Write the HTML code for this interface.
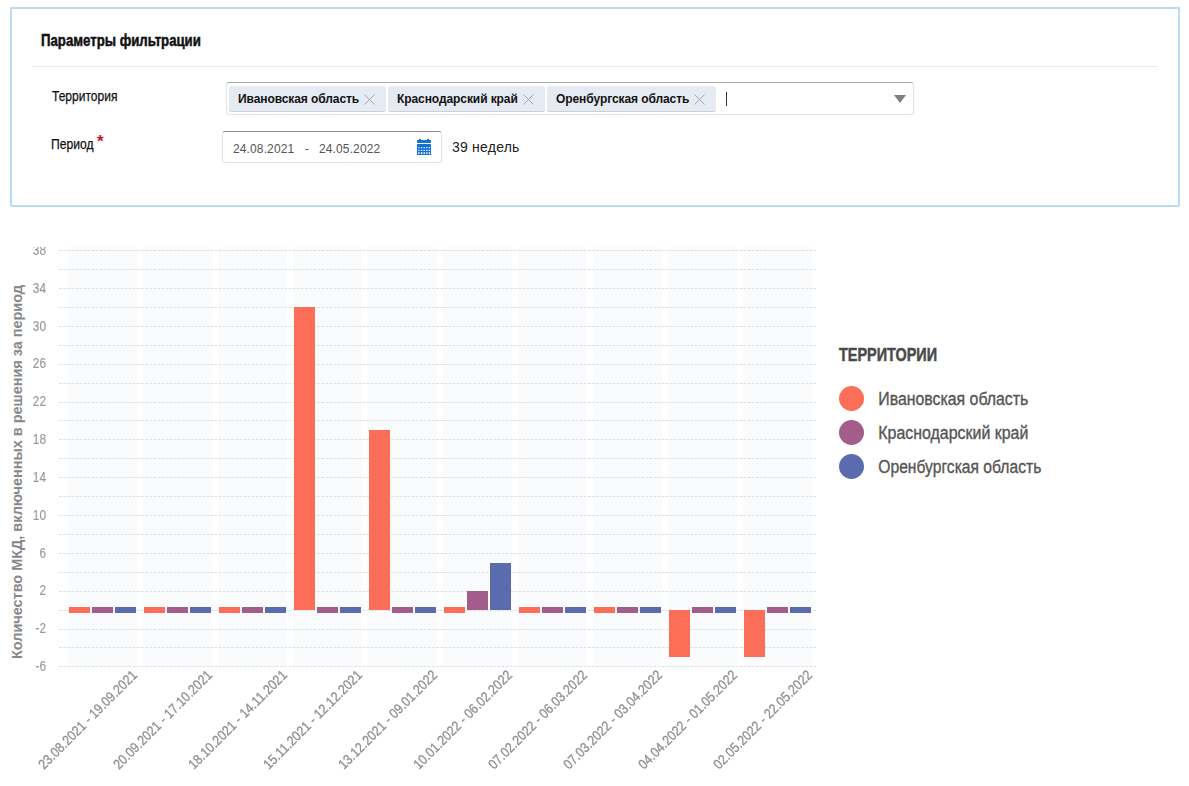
<!DOCTYPE html>
<html lang="ru"><head><meta charset="utf-8"><title>Параметры фильтрации</title>
<style>
html,body{margin:0;padding:0;background:#fff;}
body{width:1189px;height:786px;position:relative;overflow:hidden;font-family:"Liberation Sans",sans-serif;color:#111;}
.panel{position:absolute;left:10px;top:7px;width:1166px;height:196px;border:2px solid #badbf6;border-radius:0 0 2px 2px;background:#fff;}
.cond{position:absolute;white-space:nowrap;display:inline-block;transform-origin:0 0;line-height:1;}
.title{left:41px;top:33px;font-size:16px;font-weight:bold;color:#111;-webkit-text-stroke:0.5px #111;}
.hr{position:absolute;left:32px;top:66px;width:1126px;height:1px;background:#e9e9e9;}
.lbl{font-size:14px;color:#111;-webkit-text-stroke:0.25px #111;}
.select{position:absolute;left:226px;top:82px;width:686px;height:31px;border:1px solid #dfe4ea;border-top-color:#a9a9a9;border-radius:3px;background:#fff;}
.tag{position:absolute;top:86px;height:25px;background:#e6eaf2;border-radius:3px;border-bottom:1px solid #c9cdd4;box-sizing:content-box;}
.tag .tt{position:absolute;left:9px;top:6px;letter-spacing:-0.08px;font-size:12px;font-weight:bold;line-height:14px;color:#111;white-space:nowrap;}
.tag .x{position:absolute;right:11px;top:8px;}
.caret{position:absolute;left:726px;top:92px;width:1px;height:14px;background:#333;}
.arrow{position:absolute;left:894px;top:95px;width:0;height:0;border-left:6px solid transparent;border-right:6px solid transparent;border-top:8px solid #808080;}
.date{position:absolute;left:222px;top:131px;width:218px;height:30px;border:1px solid #dfe4ea;border-top-color:#8f8f8f;border-radius:3px;background:#fff;}
.dtext{position:absolute;top:142px;letter-spacing:0.12px;font-size:12px;line-height:14px;color:#555;white-space:pre;}
.weeks{position:absolute;left:452px;top:139px;letter-spacing:0.22px;font-size:14px;line-height:16px;color:#222;white-space:nowrap;}
.cal{position:absolute;left:416px;top:138px;}
.chart{position:absolute;left:0;top:210px;}
.gray{will-change:transform;}
</style></head>
<body>
<div class="panel"></div>
<span class="cond title" style="transform:scaleX(0.8250)">Параметры фильтрации</span>
<div class="hr"></div>
<span class="cond lbl" style="left:52px;top:89px;transform:scaleX(0.8597)">Территория</span>
<span class="cond lbl" style="left:51px;top:137px;transform:scaleX(0.8654)">Период</span>
<span class="cond" style="left:97px;top:133px;font-size:17px;font-weight:bold;color:#c8102e">*</span>
<div class="select"></div>
<div class="tag" style="left:229px;width:157px"><span class="tt">Ивановская область</span><svg class="x" width="11" height="11" viewBox="0 0 11 11"><path d="M0.5 0.5 L10.5 10.5 M10.5 0.5 L0.5 10.5" stroke="#a4abb5" stroke-width="1" fill="none"/></svg></div>
<div class="tag" style="left:388px;width:157px"><span class="tt">Краснодарский край</span><svg class="x" width="11" height="11" viewBox="0 0 11 11"><path d="M0.5 0.5 L10.5 10.5 M10.5 0.5 L0.5 10.5" stroke="#a4abb5" stroke-width="1" fill="none"/></svg></div>
<div class="tag" style="left:547px;width:169px"><span class="tt">Оренбургская область</span><svg class="x" width="11" height="11" viewBox="0 0 11 11"><path d="M0.5 0.5 L10.5 10.5 M10.5 0.5 L0.5 10.5" stroke="#a4abb5" stroke-width="1" fill="none"/></svg></div>
<div class="caret"></div>
<div class="arrow"></div>
<div class="date"></div>
<span class="dtext" style="left:233px">24.08.2021</span>
<span class="dtext" style="left:305px">-</span>
<span class="dtext" style="left:319px">24.05.2022</span>
<svg class="cal" width="16" height="18" viewBox="0 0 16 18">
<g fill="#1272d6"><rect x="3" y="0.8" width="2" height="3"/><rect x="11" y="0.8" width="2" height="3"/>
<rect x="1" y="2" width="14" height="3" rx="0.6"/><rect x="1" y="6" width="14" height="11" rx="0.6"/></g>
<g fill="#fff"><rect x="2.3" y="9" width="1.3" height="1.2"/><rect x="5" y="9" width="1.3" height="1.2"/><rect x="7.6" y="9" width="1.3" height="1.2"/><rect x="10.2" y="9" width="1.3" height="1.2"/><rect x="12.8" y="9" width="1.3" height="1.2"/>
<rect x="2.3" y="11.8" width="1.3" height="1.2"/><rect x="5" y="11.8" width="1.3" height="1.2"/><rect x="7.6" y="11.8" width="1.3" height="1.2"/><rect x="10.2" y="11.8" width="1.3" height="1.2"/><rect x="12.8" y="11.8" width="1.3" height="1.2"/>
<rect x="2.3" y="14.2" width="1.3" height="1.8"/><rect x="5" y="14.2" width="1.3" height="1.8"/><rect x="7.6" y="14.2" width="1.3" height="1.8"/><rect x="10.2" y="14.2" width="1.3" height="1.8"/><rect x="12.8" y="14.2" width="1.3" height="1.8"/></g>
</svg>
<span class="weeks">39 недель</span>
<svg class="chart" width="1189" height="576" viewBox="0 210 1189 576">
<g fill="#fafbfd">
<rect x="68" y="247" width="69" height="420"/>
<rect x="143" y="247" width="69" height="420"/>
<rect x="218" y="247" width="69" height="420"/>
<rect x="293" y="247" width="69" height="420"/>
<rect x="368" y="247" width="69" height="420"/>
<rect x="443" y="247" width="69" height="420"/>
<rect x="518" y="247" width="69" height="420"/>
<rect x="593" y="247" width="69" height="420"/>
<rect x="668" y="247" width="69" height="420"/>
<rect x="743" y="247" width="69" height="420"/>
</g>
<g stroke="#dce1e6" stroke-width="1" stroke-dasharray="2.8 1.3">
<line x1="59" x2="817" y1="250.5" y2="250.5"/>
<line x1="59" x2="817" y1="269.5" y2="269.5"/>
<line x1="59" x2="817" y1="288.5" y2="288.5"/>
<line x1="59" x2="817" y1="307.5" y2="307.5"/>
<line x1="59" x2="817" y1="326.5" y2="326.5"/>
<line x1="59" x2="817" y1="345.5" y2="345.5"/>
<line x1="59" x2="817" y1="364.5" y2="364.5"/>
<line x1="59" x2="817" y1="383.5" y2="383.5"/>
<line x1="59" x2="817" y1="402.5" y2="402.5"/>
<line x1="59" x2="817" y1="420.5" y2="420.5"/>
<line x1="59" x2="817" y1="439.5" y2="439.5"/>
<line x1="59" x2="817" y1="458.5" y2="458.5"/>
<line x1="59" x2="817" y1="477.5" y2="477.5"/>
<line x1="59" x2="817" y1="496.5" y2="496.5"/>
<line x1="59" x2="817" y1="515.5" y2="515.5"/>
<line x1="59" x2="817" y1="534.5" y2="534.5"/>
<line x1="59" x2="817" y1="553.5" y2="553.5"/>
<line x1="59" x2="817" y1="572.5" y2="572.5"/>
<line x1="59" x2="817" y1="591.5" y2="591.5"/>
<line x1="59" x2="817" y1="610.5" y2="610.5"/>
<line x1="59" x2="817" y1="629.5" y2="629.5"/>
<line x1="59" x2="817" y1="647.5" y2="647.5"/>
<line x1="59" x2="817" y1="666.5" y2="666.5"/>
</g>
<g shape-rendering="crispEdges">
<rect x="69" y="607" width="21" height="6" fill="#fc6e58"/>
<rect x="92" y="607" width="21" height="6" fill="#a35d8a"/>
<rect x="115" y="607" width="21" height="6" fill="#5a6cae"/>
<rect x="144" y="607" width="21" height="6" fill="#fc6e58"/>
<rect x="167" y="607" width="21" height="6" fill="#a35d8a"/>
<rect x="190" y="607" width="21" height="6" fill="#5a6cae"/>
<rect x="219" y="607" width="21" height="6" fill="#fc6e58"/>
<rect x="242" y="607" width="21" height="6" fill="#a35d8a"/>
<rect x="265" y="607" width="21" height="6" fill="#5a6cae"/>
<rect x="294" y="307" width="21" height="303" fill="#fc6e58"/>
<rect x="317" y="607" width="21" height="6" fill="#a35d8a"/>
<rect x="340" y="607" width="21" height="6" fill="#5a6cae"/>
<rect x="369" y="430" width="21" height="180" fill="#fc6e58"/>
<rect x="392" y="607" width="21" height="6" fill="#a35d8a"/>
<rect x="415" y="607" width="21" height="6" fill="#5a6cae"/>
<rect x="444" y="607" width="21" height="6" fill="#fc6e58"/>
<rect x="467" y="591" width="21" height="19" fill="#a35d8a"/>
<rect x="490" y="563" width="21" height="47" fill="#5a6cae"/>
<rect x="519" y="607" width="21" height="6" fill="#fc6e58"/>
<rect x="542" y="607" width="21" height="6" fill="#a35d8a"/>
<rect x="565" y="607" width="21" height="6" fill="#5a6cae"/>
<rect x="594" y="607" width="21" height="6" fill="#fc6e58"/>
<rect x="617" y="607" width="21" height="6" fill="#a35d8a"/>
<rect x="640" y="607" width="21" height="6" fill="#5a6cae"/>
<rect x="669" y="610" width="21" height="47" fill="#fc6e58"/>
<rect x="692" y="607" width="21" height="6" fill="#a35d8a"/>
<rect x="715" y="607" width="21" height="6" fill="#5a6cae"/>
<rect x="744" y="610" width="21" height="47" fill="#fc6e58"/>
<rect x="767" y="607" width="21" height="6" fill="#a35d8a"/>
<rect x="790" y="607" width="21" height="6" fill="#5a6cae"/>
</g>
<text transform="translate(22 659) rotate(-90)" font-family="'Liberation Sans', sans-serif" font-weight="bold" font-size="14.5" fill="#888888" textLength="374" lengthAdjust="spacingAndGlyphs">Количество МКД, включенных в решения за период</text>
<text x="839" y="360.6" font-family="'Liberation Sans', sans-serif" font-weight="bold" font-size="17.5" fill="#4a4a4a" stroke="#4a4a4a" stroke-width="0.5" textLength="98" lengthAdjust="spacingAndGlyphs">ТЕРРИТОРИИ</text>
<circle cx="851.5" cy="398.5" r="12.5" fill="#fc6e58"/>
<text x="878.3" y="404.6" font-family="'Liberation Sans', sans-serif" font-size="17.5" fill="#555" stroke="#555" stroke-width="0.35" textLength="150" lengthAdjust="spacingAndGlyphs">Ивановская область</text>
<circle cx="851.5" cy="432.5" r="12.5" fill="#a35d8a"/>
<text x="878.3" y="438.6" font-family="'Liberation Sans', sans-serif" font-size="17.5" fill="#555" stroke="#555" stroke-width="0.35" textLength="150" lengthAdjust="spacingAndGlyphs">Краснодарский край</text>
<circle cx="851.5" cy="466.5" r="12.5" fill="#5a6cae"/>
<text x="878.3" y="472.6" font-family="'Liberation Sans', sans-serif" font-size="17.5" fill="#555" stroke="#555" stroke-width="0.35" textLength="163" lengthAdjust="spacingAndGlyphs">Оренбургская область</text>
</svg>
<svg class="chart gray" width="1189" height="576" viewBox="0 210 1189 576">
<defs><clipPath id="plotclip2"><rect x="0" y="247" width="830" height="440"/></clipPath></defs>
<g clip-path="url(#plotclip2)" font-family="'Liberation Sans', sans-serif" font-size="14" fill="#999" stroke="#999" stroke-width="0.15" text-anchor="end">
<text x="46" y="254.9" textLength="13.2" lengthAdjust="spacingAndGlyphs">38</text>
<text x="46" y="292.7" textLength="13.2" lengthAdjust="spacingAndGlyphs">34</text>
<text x="46" y="330.5" textLength="13.2" lengthAdjust="spacingAndGlyphs">30</text>
<text x="46" y="368.4" textLength="13.2" lengthAdjust="spacingAndGlyphs">26</text>
<text x="46" y="406.2" textLength="13.2" lengthAdjust="spacingAndGlyphs">22</text>
<text x="46" y="444.0" textLength="13.2" lengthAdjust="spacingAndGlyphs">18</text>
<text x="46" y="481.9" textLength="13.2" lengthAdjust="spacingAndGlyphs">14</text>
<text x="46" y="519.7" textLength="13.2" lengthAdjust="spacingAndGlyphs">10</text>
<text x="46" y="557.5" textLength="6.5" lengthAdjust="spacingAndGlyphs">6</text>
<text x="46" y="595.4" textLength="6.5" lengthAdjust="spacingAndGlyphs">2</text>
<text x="46" y="633.2" textLength="10.5" lengthAdjust="spacingAndGlyphs">-2</text>
<text x="46" y="671.1" textLength="10.5" lengthAdjust="spacingAndGlyphs">-6</text>
</g>
<g font-family="'Liberation Sans', sans-serif" font-size="14" fill="#909090" stroke="#909090" stroke-width="0.3" text-anchor="end">
<text transform="translate(138 676) rotate(-45)" textLength="133" lengthAdjust="spacingAndGlyphs">23.08.2021 - 19.09.2021</text>
<text transform="translate(213 676) rotate(-45)" textLength="133" lengthAdjust="spacingAndGlyphs">20.09.2021 - 17.10.2021</text>
<text transform="translate(288 676) rotate(-45)" textLength="133" lengthAdjust="spacingAndGlyphs">18.10.2021 - 14.11.2021</text>
<text transform="translate(363 676) rotate(-45)" textLength="133" lengthAdjust="spacingAndGlyphs">15.11.2021 - 12.12.2021</text>
<text transform="translate(438 676) rotate(-45)" textLength="133" lengthAdjust="spacingAndGlyphs">13.12.2021 - 09.01.2022</text>
<text transform="translate(513 676) rotate(-45)" textLength="133" lengthAdjust="spacingAndGlyphs">10.01.2022 - 06.02.2022</text>
<text transform="translate(588 676) rotate(-45)" textLength="133" lengthAdjust="spacingAndGlyphs">07.02.2022 - 06.03.2022</text>
<text transform="translate(663 676) rotate(-45)" textLength="133" lengthAdjust="spacingAndGlyphs">07.03.2022 - 03.04.2022</text>
<text transform="translate(738 676) rotate(-45)" textLength="133" lengthAdjust="spacingAndGlyphs">04.04.2022 - 01.05.2022</text>
<text transform="translate(813 676) rotate(-45)" textLength="133" lengthAdjust="spacingAndGlyphs">02.05.2022 - 22.05.2022</text>
</g>
</svg>
</body></html>
